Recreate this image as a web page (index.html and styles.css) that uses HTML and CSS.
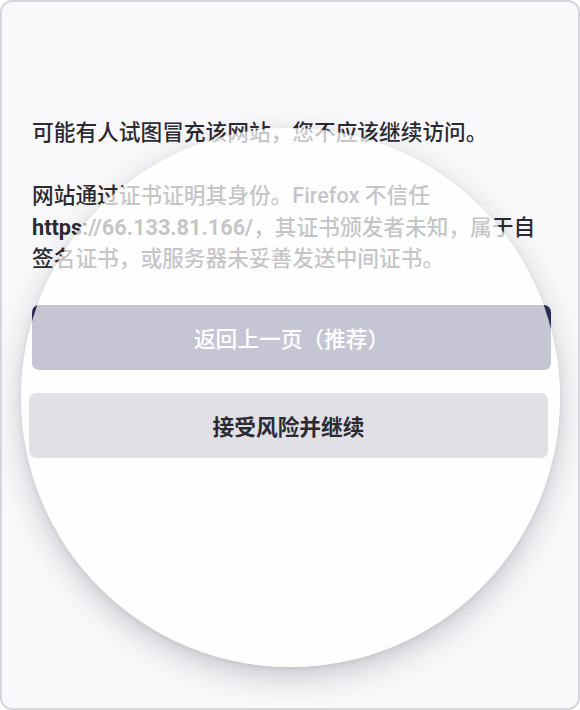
FILE: index.html
```html
<!DOCTYPE html>
<html lang="zh-CN">
<head>
<meta charset="utf-8">
<title>警告：潜在的安全风险</title>
<link rel="stylesheet" href="styles.css">
</head>
<body>
<div class="card">
  <p class="para">可能有人试图冒充该网站，您不应该继续访问。</p>
  <p class="para">网站通过证书证明其身份。Firefox 不信任 <b class="url">https://66.133.81.166/</b>，其证书颁发者未知，属于自签名证书，或服务器未妥善发送中间证书。</p>
  <button class="btn btn-primary">返回上一页（推荐）</button>
  <div class="spotlight"></div>
  <button class="btn btn-secondary">接受风险并继续</button>
</div>
</body>
</html>
```

FILE: styles.css
```css
html, body {
  margin: 0;
  padding: 0;
  background: #ffffff;
}

.card {
  position: relative;
  box-sizing: border-box;
  width: 580px;
  height: 710px;
  border: 2px solid #d6d6dc;
  border-radius: 12px;
  background: #f9f9fb;
  padding: 115px 27px 0 30px;
  display: flex;
  flex-direction: column;
  align-items: stretch;
  overflow: hidden;
  font-family: Roboto, "Noto Sans CJK SC", sans-serif;
  color: #2b2a33;
}

.para {
  margin: 0 0 31.5px 0;
  font-size: 21.7px;
  line-height: 31.5px;
  font-weight: 500;
}

.para:last-of-type {
  margin-bottom: 0;
}

.url {
  font-weight: 700;
}

.btn {
  display: flex;
  align-items: center;
  justify-content: center;
  height: 65px;
  border: none;
  border-radius: 7px;
  font-family: Roboto, "Noto Sans CJK SC", sans-serif;
  font-size: 21.7px;
  padding: 0;
}

.btn-primary {
  margin-top: 30.5px;
  background: #2f2a5c;
  color: #ffffff;
  font-weight: 500;
}

.btn-secondary {
  position: relative;
  z-index: 2;
  margin-top: 23px;
  margin-left: -3px;
  margin-right: 3px;
  background: #e0e0e6;
  color: #2b2a33;
  font-weight: 700;
}

.spotlight {
  position: absolute;
  z-index: 1;
  left: 19px;
  top: 126px;
  width: 539px;
  height: 539px;
  border-radius: 50%;
  background: rgba(255, 255, 255, 0.73);
  box-shadow: 0 2px 5px rgba(30, 30, 50, 0.08), 0 10px 30px rgba(40, 40, 60, 0.24);
}
```
